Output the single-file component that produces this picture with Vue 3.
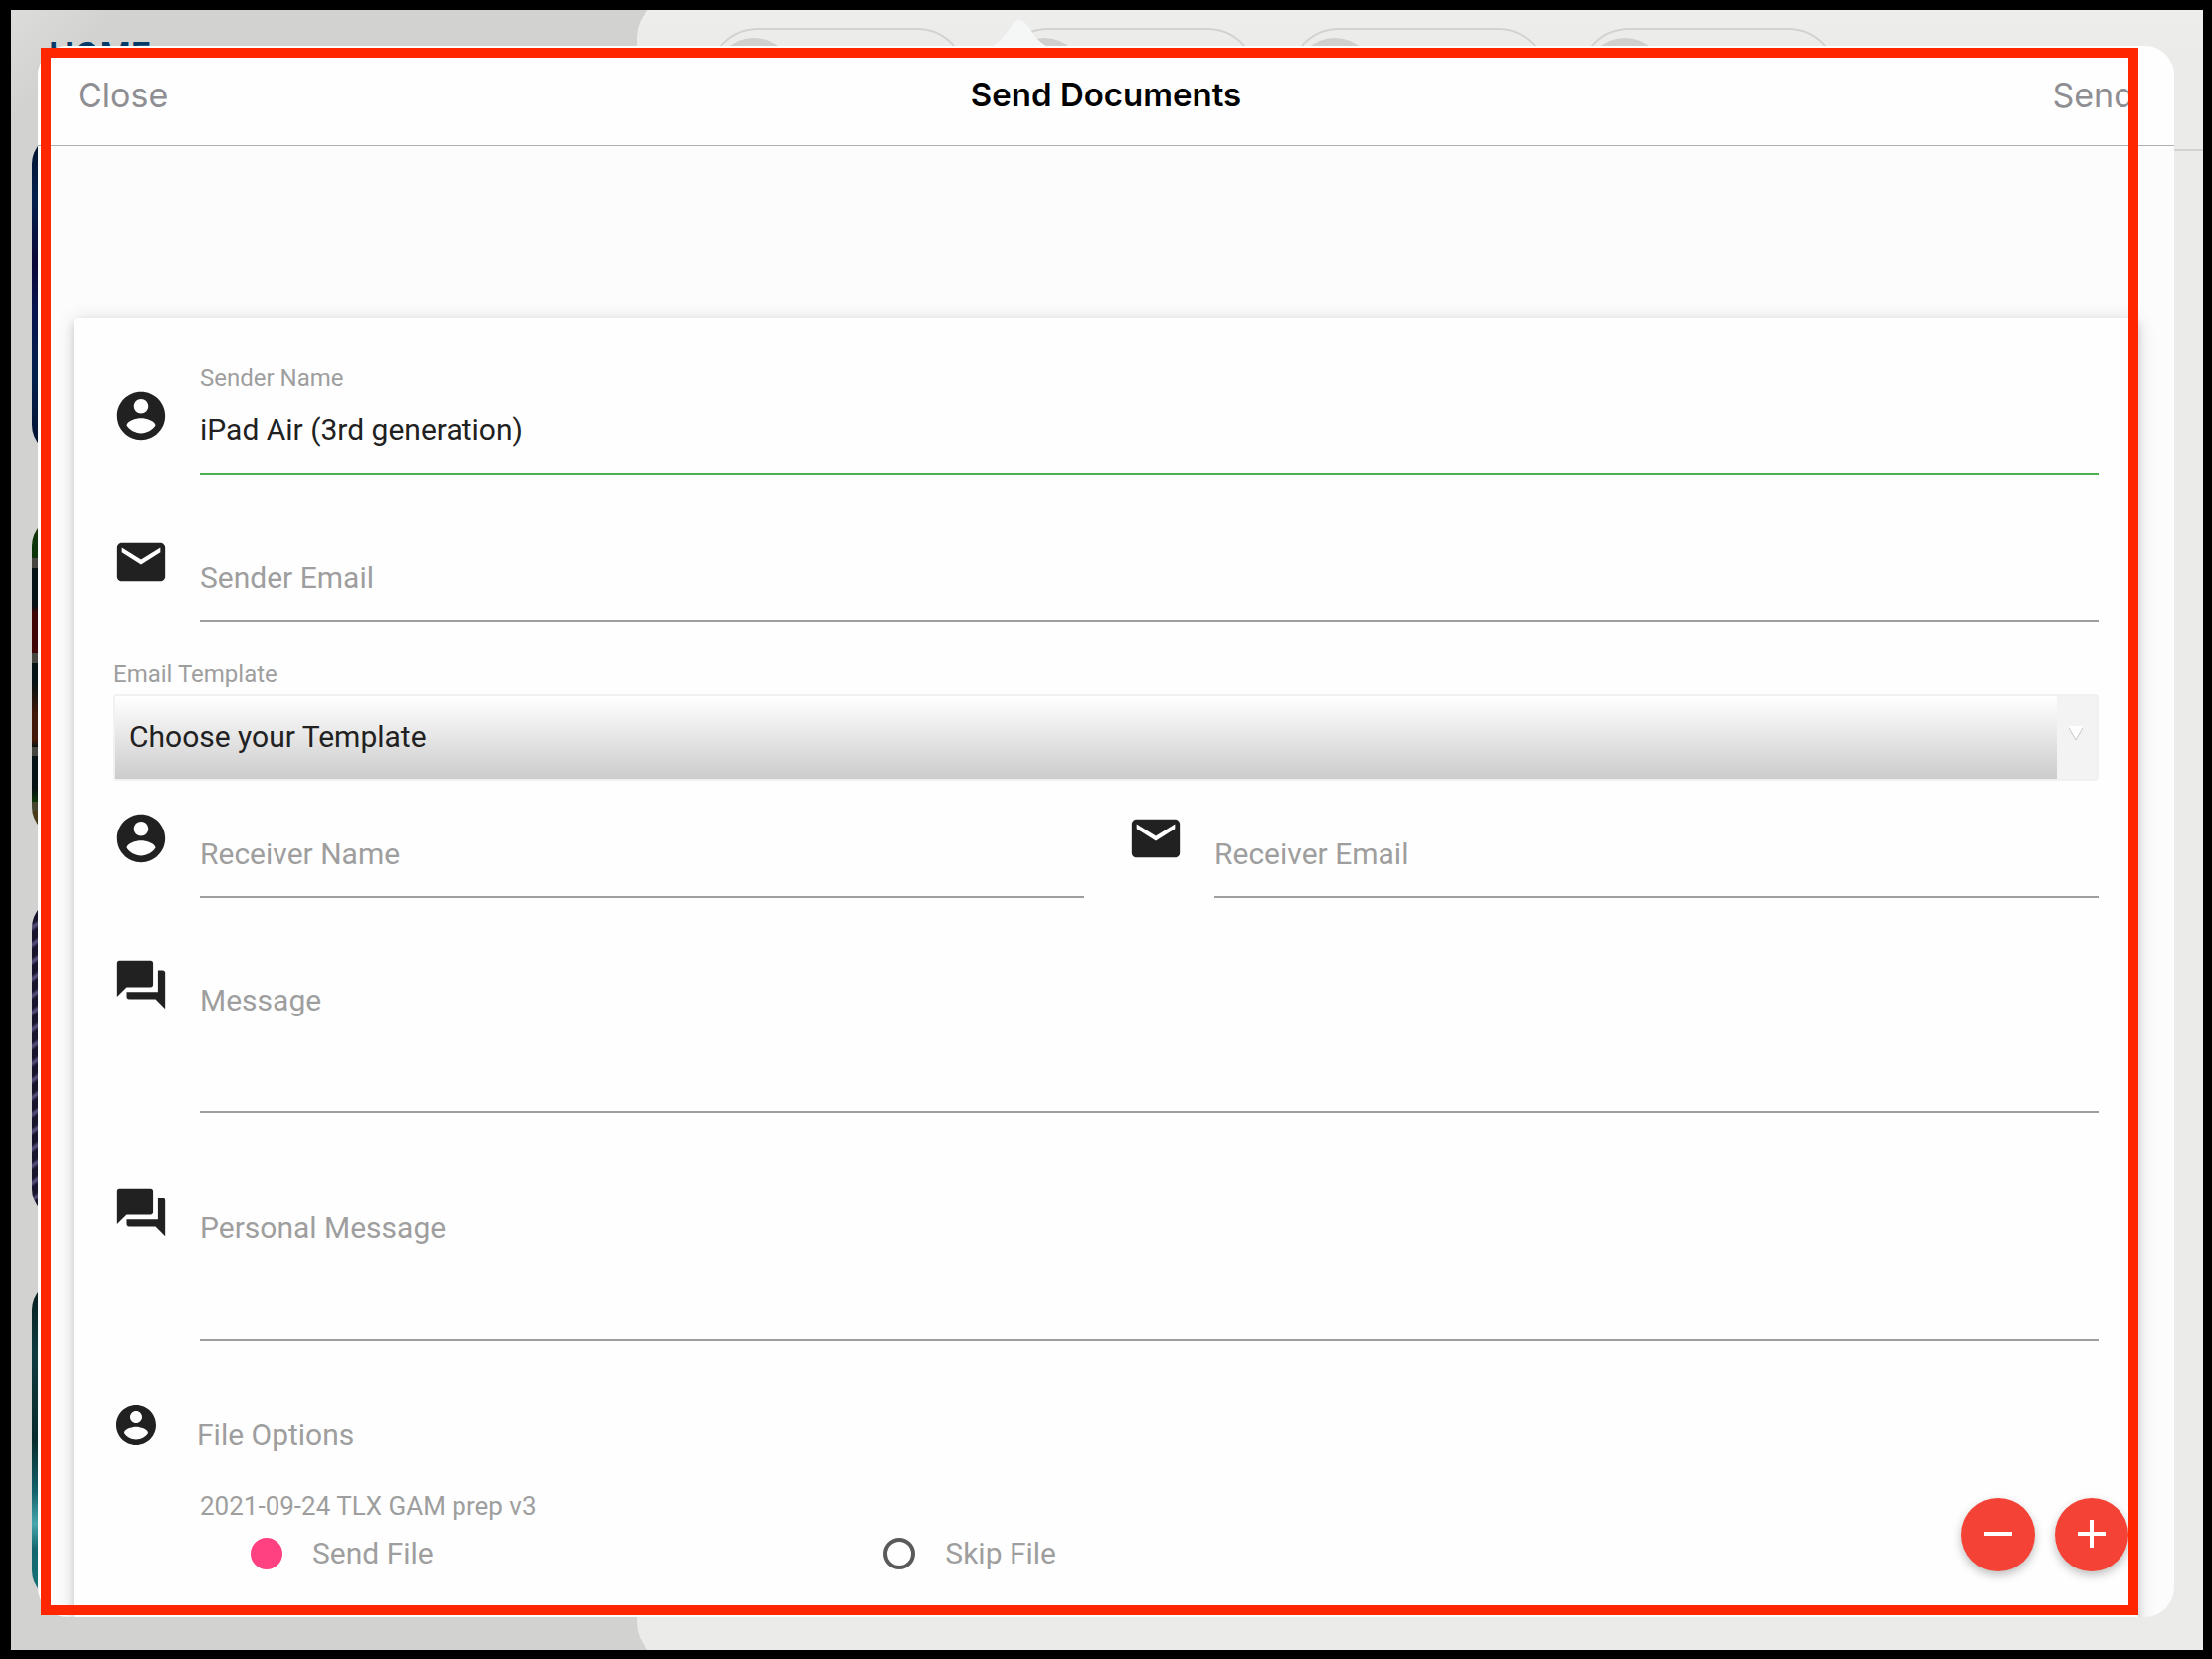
<script setup>
import { ref } from 'vue'

const senderName = ref('iPad Air (3rd generation)')
const senderEmail = ref('')
const template = ref('')
const receiverName = ref('')
const receiverEmail = ref('')
const message = ref('')
const personalMessage = ref('')
const fileAction = ref('send')

const icons = {
  person: 'M12 2C6.48 2 2 6.48 2 12s4.48 10 10 10 10-4.48 10-10S17.52 2 12 2zm0 3c1.66 0 3 1.34 3 3s-1.34 3-3 3-3-1.34-3-3 1.34-3 3-3zm0 14.2c-2.5 0-4.71-1.28-6-3.22.03-1.99 4-3.08 6-3.08 1.99 0 5.97 1.09 6 3.08-1.29 1.94-3.5 3.22-6 3.22z',
  mail: 'M20 4H4c-1.1 0-1.99.9-1.99 2L2 18c0 1.1.9 2 2 2h16c1.1 0 2-.9 2-2V6c0-1.1-.9-2-2-2zm0 4l-8 5-8-5V6l8 5 8-5v2z',
  forum: 'M21 6h-2v9H6v2c0 .55.45 1 1 1h11l4 4V7c0-.55-.45-1-1-1zm-4 6V3c0-.55-.45-1-1-1H3c-.55 0-1 .45-1 1v14l4-4h10c.55 0 1-.45 1-1z',
}
const tiles = ['waves', 'shelves', 'stripes', 'ocean']
</script>

<template>
  <div class="device">
    <div class="backdrop">
      <aside class="sidebar">
        <div class="home">HOME</div>
        <div class="tiles">
          <div v-for="tile in tiles" :key="tile" class="tile" :class="tile"></div>
        </div>
      </aside>
      <div class="main-panel">
        <div class="chips">
          <div v-for="n in 4" :key="n" class="chip"><span class="avatar"></span></div>
        </div>
      </div>
    </div>

    <svg class="arrow" viewBox="0 0 64 28" aria-hidden="true">
      <path d="M0 28C14 24 20 10 26 3Q32-3 38 3C44 10 50 24 64 28Z" fill="#f5f6f6" />
    </svg>

    <section class="popover">
      <header class="bar">
        <button type="button" class="bar-button">Close</button>
        <h1>Send Documents</h1>
        <button type="button" class="bar-button">Send</button>
      </header>

      <form class="card" @submit.prevent>
        <div class="field filled">
          <svg class="icon" viewBox="0 0 24 24" aria-hidden="true"><path :d="icons.person" /></svg>
          <div class="control">
            <label for="sender-name">Sender Name</label>
            <input id="sender-name" v-model="senderName" type="text" />
          </div>
        </div>

        <div class="field">
          <svg class="icon" viewBox="0 0 24 24" aria-hidden="true"><path :d="icons.mail" /></svg>
          <div class="control">
            <input v-model="senderEmail" type="email" placeholder="Sender Email" aria-label="Sender Email" />
          </div>
        </div>

        <div class="template">
          <label for="template">Email Template</label>
          <div class="select-box">
            <select id="template" v-model="template">
              <option value="">Choose your Template</option>
            </select>
            <span class="select-arrow">
              <svg viewBox="0 0 14 14" aria-hidden="true">
                <path d="M0 0H14L7 14Z" fill="#fff" />
                <path d="M0 2L7 14L14 2" fill="none" stroke="#c8c8c8" />
              </svg>
            </span>
          </div>
        </div>

        <div class="pair">
          <div class="field">
            <svg class="icon" viewBox="0 0 24 24" aria-hidden="true"><path :d="icons.person" /></svg>
            <div class="control">
              <input v-model="receiverName" type="text" placeholder="Receiver Name" aria-label="Receiver Name" />
            </div>
          </div>
          <div class="field">
            <svg class="icon" viewBox="0 0 24 24" aria-hidden="true"><path :d="icons.mail" /></svg>
            <div class="control">
              <input v-model="receiverEmail" type="email" placeholder="Receiver Email" aria-label="Receiver Email" />
            </div>
          </div>
        </div>

        <div class="field area">
          <svg class="icon" viewBox="0 0 24 24" aria-hidden="true"><path :d="icons.forum" /></svg>
          <div class="control">
            <textarea v-model="message" placeholder="Message" aria-label="Message"></textarea>
          </div>
        </div>
        <div class="field area">
          <svg class="icon" viewBox="0 0 24 24" aria-hidden="true"><path :d="icons.forum" /></svg>
          <div class="control">
            <textarea v-model="personalMessage" placeholder="Personal Message" aria-label="Personal Message"></textarea>
          </div>
        </div>

        <div class="options-head">
          <svg viewBox="0 0 24 24" aria-hidden="true"><path :d="icons.person" /></svg>
          <h2>File Options</h2>
        </div>
        <fieldset class="file">
          <legend>2021-09-24 TLX GAM prep v3</legend>
          <div class="choices">
            <label><input v-model="fileAction" type="radio" name="file" value="send" />Send File</label>
            <label><input v-model="fileAction" type="radio" name="file" value="skip" />Skip File</label>
          </div>
        </fieldset>
      </form>

      <div class="fabs">
        <button type="button" aria-label="Remove receiver">
          <svg viewBox="0 0 28 28" aria-hidden="true"><path d="M0 14H28" /></svg>
        </button>
        <button type="button" aria-label="Add receiver">
          <svg viewBox="0 0 28 28" aria-hidden="true"><path d="M0 14H28M14 0V28" /></svg>
        </button>
      </div>
    </section>

    <div class="highlight"></div>
  </div>
</template>

<style>
body {
  background: #000;
}
</style>

<style scoped>
.device,
.device * {
  box-sizing: border-box;
}
.device {
  position: relative;
  height: 100vh;
  overflow: hidden;
  border: solid #000;
  border-width: 10px 9px 9px 11px;
  background: #d2d2d0;
  font-family: Roboto, sans-serif;
}
button,
input,
textarea,
select {
  margin: 0;
  padding: 0;
  border: 0;
  border-radius: 0;
  outline: 0;
  background: none;
  font: inherit;
  color: inherit;
  appearance: none;
}

/* App behind the dialog */
.backdrop {
  display: flex;
  height: 100%;
  background: linear-gradient(135deg, #dcdcda 0, #d2d2d0 80px);
}
.sidebar {
  flex: none;
  width: 629px;
  padding: 24px 21px 0;
}
.home {
  height: 101px;
  padding-left: 17px;
  font: 600 34px/42px Inter, sans-serif;
  color: #063a68;
}
.tiles {
  display: flex;
  flex-direction: column;
  gap: 62px;
}
.tile {
  height: 322px;
  border-radius: 30px;
}
.waves {
  background: linear-gradient(#04122c, #03204d 20%, #0b0838 40%, #07144e 55%, #03204d 75%, #04102e);
}
.shelves {
  background: linear-gradient(#3b3008, #0d3509 7%, #0d3509 13%, #464540 13%, #464540 16%, #061213 16%, #061213 28%, #3f0506 30%, #3f0506 43%, #464540 43%, #464540 46%, #061213 46%, #061213 52%, #421808 62%, #421808 70%, #061213 72%, #464540 72%, #464540 75%, #061213 75%, #061213 85%, #0d3509 89%, #464530 89%, #464530 92%, #4a3b18 92%);
}
.stripes {
  background: repeating-linear-gradient(145deg, #17142c 0 7px, #544b76 10px 11px, #17142c 14px);
}
.ocean {
  background: linear-gradient(#06191a, #0e3b3e 22%, #082b2d 50%, #12626a 66%, #47a6ae 76%, #12666c 84%, #17767c);
}
.main-panel {
  flex: 1;
  margin-top: -12px;
  margin-bottom: -12px;
  padding: 30px 72px;
  border-radius: 40px 0 0 40px;
  background: linear-gradient(#eeeeed, #ebebea 60px);
}
.chips {
  display: flex;
  gap: 32px;
  height: 124px;
  margin-right: -72px;
  border-bottom: 2px solid #d2d2d0;
}
.chip {
  width: 260px;
  height: 100px;
  padding: 8px 4px;
  border: 2px solid #d2d2d0;
  border-radius: 50px;
}
.avatar {
  display: block;
  width: 80px;
  height: 80px;
  border-radius: 50%;
  background: #d0d0ce;
}

/* Dialog */
.arrow {
  position: absolute;
  top: 10px;
  left: 982px;
  width: 64px;
  height: 28px;
}
.popover {
  position: absolute;
  inset: 36px 29px 33px 27px;
  overflow: hidden;
  border-radius: 30px;
  background: #fcfcfc;
}
.bar {
  display: grid;
  grid-template-columns: 1fr auto 1fr;
  align-items: center;
  height: 101px;
  padding: 0 40px 2px;
  border-bottom: 1px solid #b0b0b0;
  background: #fefefe;
  font-family: Inter, sans-serif;
}
.bar-button {
  justify-self: start;
  font-size: 34px;
  color: #8e8e93;
}
.bar-button:last-child {
  justify-self: end;
}
h1 {
  margin: 0;
  font-size: 33px;
  font-weight: 600;
}
.card {
  margin: 173px 36px 0;
  padding: 48px 40px 72px;
  border-radius: 4px;
  background: #fefefe;
  box-shadow: 0 4px 8px rgba(0, 0, 0, 0.14), 0 2px 20px rgba(0, 0, 0, 0.12);
  font-size: 30px;
  line-height: 36px;
  color: #212121;
}
.field {
  display: flex;
  align-items: flex-end;
  gap: 29px;
  height: 147px;
}
.filled {
  height: 110px;
}
.icon {
  flex: none;
  width: 58px;
  height: 58px;
  margin: 0 1px 31px -1px;
}
svg {
  fill: #212121;
}
.control {
  display: flex;
  flex: 1;
  flex-direction: column;
  min-width: 0;
}
.control label,
.template label {
  font-size: 24px;
  line-height: 28px;
  color: #9e9e9e;
}
.control input {
  height: 66px;
  padding-bottom: 22px;
  border-bottom: 2px solid #9e9e9e;
}
.filled input {
  height: 84px;
  padding-bottom: 8px;
  border-bottom-color: #4caf50;
}
::placeholder {
  color: #9e9e9e;
  opacity: 1;
}
.template {
  display: flex;
  flex-direction: column;
  padding-top: 39px;
}
.template label {
  align-self: flex-start;
}
.select-box {
  display: flex;
  height: 87px;
  margin-top: 6px;
  border: 2px solid #f1f1f1;
  border-radius: 4px;
  background: #f3f3f3;
}
.select-box select {
  flex: 1;
  padding: 0 14px 2px;
  background: linear-gradient(#fff, #ccc);
}
.select-arrow {
  display: flex;
  align-items: flex-start;
  justify-content: center;
  width: 40px;
  padding: 30px 2px 0 0;
  pointer-events: none;
}
.select-arrow svg {
  width: 14px;
  height: 14px;
}
.pair {
  display: grid;
  grid-template-columns: 1fr 1fr;
  gap: 44px;
}
.pair .field {
  height: 118px;
}
.area {
  height: 229px;
}
.pair + .area {
  height: 216px;
}
.area .icon {
  margin-bottom: 100px;
}
textarea {
  height: 131px;
  border-bottom: 2px solid #9e9e9e;
  resize: none;
}
.options-head {
  display: flex;
  align-items: center;
  gap: 37px;
  margin: 57px 0 0 -1px;
}
.options-head svg {
  width: 48px;
  height: 48px;
}
h2 {
  margin: 20px 0 0;
  font-size: 30px;
  font-weight: 400;
  color: #9e9e9e;
}
.file {
  margin: 37px 0 0 87px;
  padding: 0;
  border: 0;
  color: #9e9e9e;
}
.file legend {
  padding: 0;
  font-size: 26px;
  line-height: 32px;
}
.choices {
  display: grid;
  grid-template-columns: repeat(3, 1fr);
  padding-top: 14px;
}
.choices label {
  display: flex;
  align-items: center;
  gap: 30px;
  padding-left: 51px;
}
.choices input {
  width: 32px;
  height: 32px;
  border: 4px solid #5a5a5a;
  border-radius: 50%;
}
.choices input:checked {
  border-color: #ff4081;
  background: #ff4081;
}
.fabs {
  position: absolute;
  right: 46px;
  bottom: 46px;
  display: flex;
  gap: 20px;
}
.fabs button {
  display: flex;
  align-items: center;
  justify-content: center;
  width: 74px;
  height: 74px;
  padding-bottom: 2px;
  border-radius: 50%;
  background: #f44336;
  box-shadow: 0 4px 10px rgba(0, 0, 0, 0.26);
}
.fabs svg {
  width: 28px;
  height: 28px;
  stroke: #fff;
  stroke-width: 4;
}
.highlight {
  position: absolute;
  inset: 38px 65px 35px 30px;
  border: 10px solid #ff2600;
  pointer-events: none;
}
</style>
